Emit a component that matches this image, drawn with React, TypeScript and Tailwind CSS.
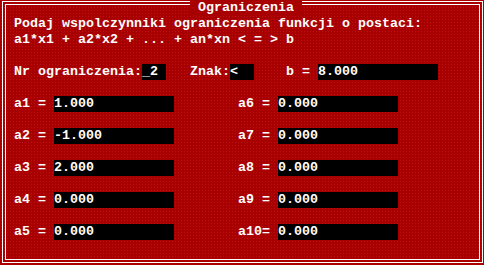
const left = [
  { label: "a1 = ", value: "1.000" },
  { label: "a2 = ", value: "-1.000" },
  { label: "a3 = ", value: "2.000" },
  { label: "a4 = ", value: "0.000" },
  { label: "a5 = ", value: "0.000" },
];

const right = [
  { label: "a6 = ", value: "0.000" },
  { label: "a7 = ", value: "0.000" },
  { label: "a8 = ", value: "0.000" },
  { label: "a9 = ", value: "0.000" },
  { label: "a10=", value: "0.000" },
];

function Field({ value, cols }: { value: string; cols: "w-6" | "w-[120px]" }) {
  return <span className={`${cols} h-4 bg-black text-white whitespace-pre`}>{value}</span>;
}

function Label({ text, w }: { text: string; w: string }) {
  return <span className={`${w} whitespace-pre`}>{text}</span>;
}

export default function App() {
  return (
    <div
      className="w-[484px] h-[265px] pt-[1px] pl-[2px] bg-[#a80000] bg-[radial-gradient(#b81212_0.8px,transparent_0.8px)] bg-[length:3px_3px] text-white text-[13.33px] leading-4 font-bold relative"
      style={{ fontFamily: '"Liberation Mono", "DejaVu Sans Mono", monospace' }}
    >
      <div className="w-[481px] h-[262px] border border-white p-[2px] flex">
        <div className="flex-1 border border-white pl-[8px] pt-[11px] flex flex-col">
          <div className="whitespace-pre">Podaj wspolczynniki ograniczenia funkcji o postaci:</div>
          <div className="whitespace-pre">a1*x1 + a2*x2 + ... + an*xn &lt; = &gt; b</div>
          <div className="mt-4 flex h-4">
            <Label text="Nr ograniczenia:" w="w-32" />
            <Field value="_2" cols="w-6" />
            <Label text="   Znak:" w="w-16" />
            <Field value="<" cols="w-6" />
            <Label text="    b = " w="w-16" />
            <Field value="8.000" cols="w-[120px]" />
          </div>
          <div className="mt-4 flex">
            <div className="w-[224px] flex flex-col gap-4">
              {left.map((r) => (
                <div key={r.label} className="flex h-4">
                  <Label text={r.label} w="w-10" />
                  <Field value={r.value} cols="w-[120px]" />
                </div>
              ))}
            </div>
            <div className="flex flex-col gap-4">
              {right.map((r) => (
                <div key={r.label} className="flex h-4">
                  <Label text={r.label} w="w-10" />
                  <Field value={r.value} cols="w-[120px]" />
                </div>
              ))}
            </div>
          </div>
        </div>
      </div>
      <div className="absolute left-[190px] top-0 h-4 px-2 bg-[#a80000] whitespace-pre">Ograniczenia</div>
    </div>
  );
}
